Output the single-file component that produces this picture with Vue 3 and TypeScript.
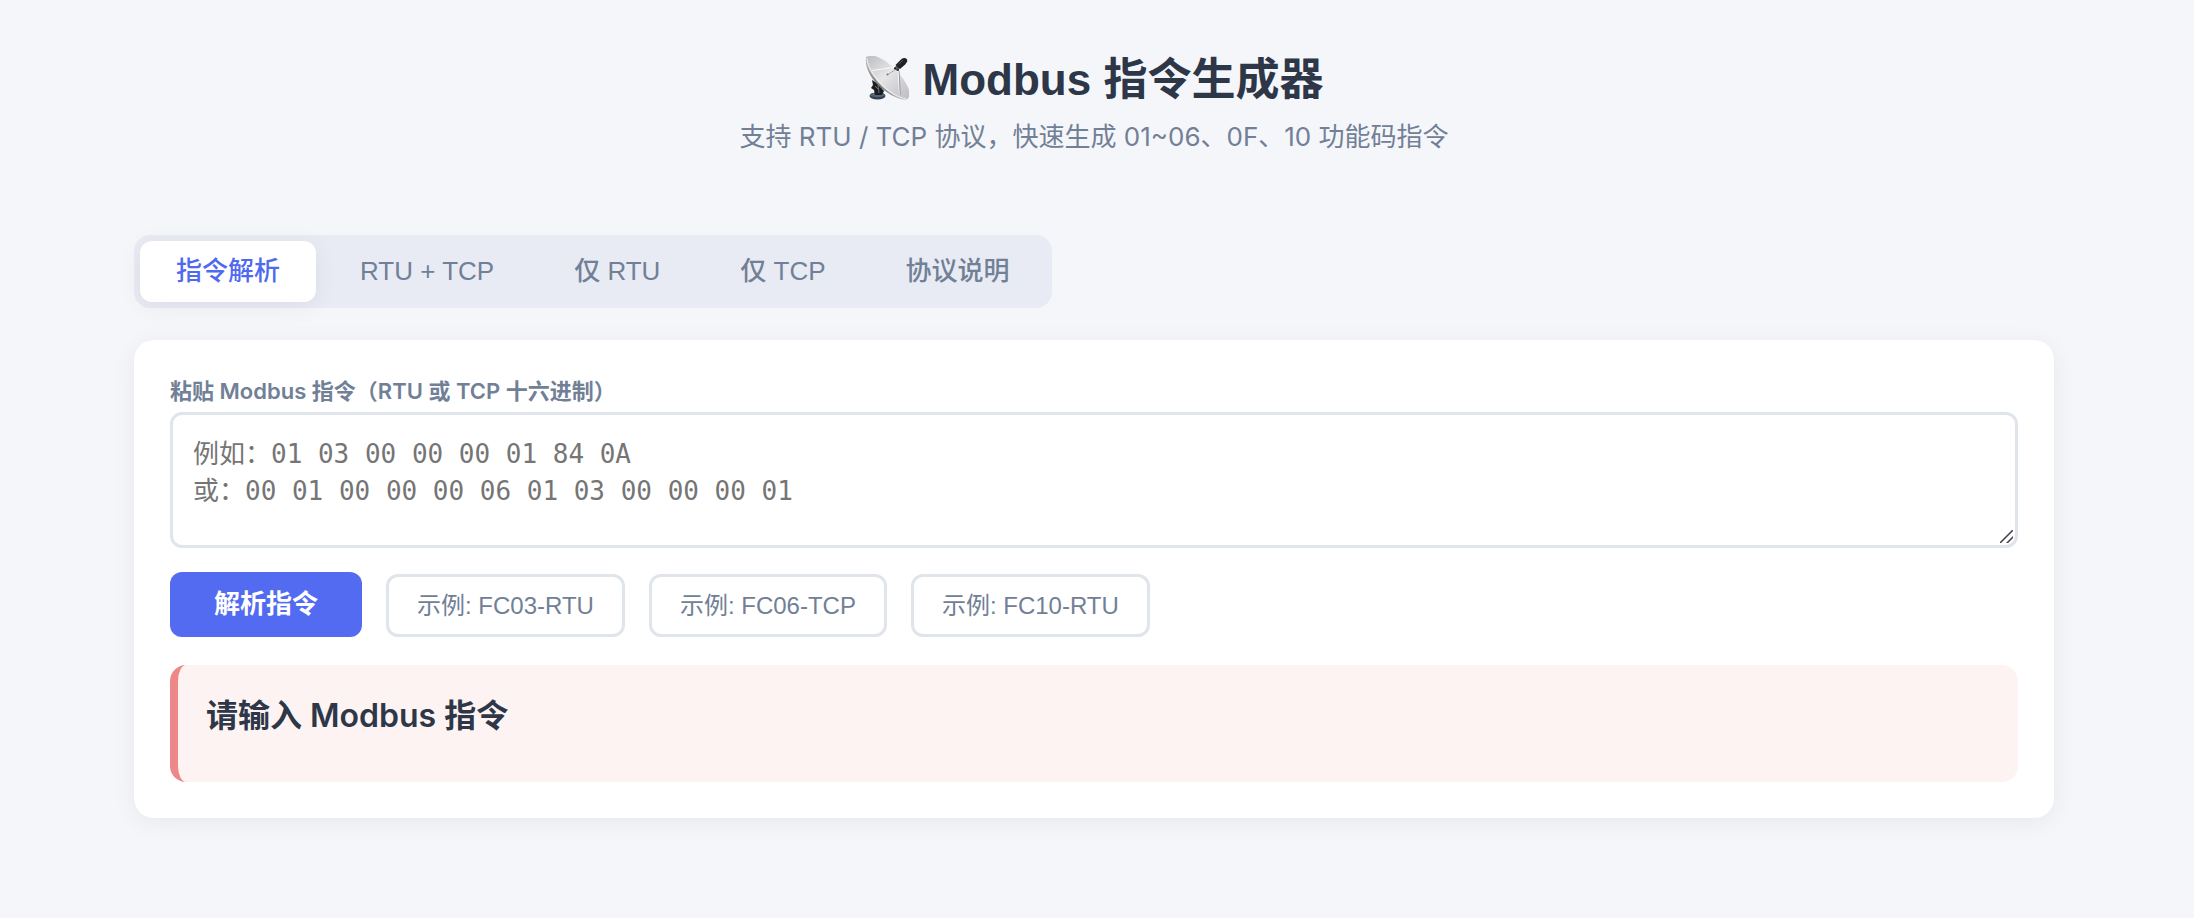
<script setup lang="ts">
import { ref } from 'vue'

interface Tab {
  id: string
  label: string
}

interface Sample {
  label: string
  frame: string
}

const tabs: Tab[] = [
  { id: 'parse', label: '指令解析' },
  { id: 'both', label: 'RTU + TCP' },
  { id: 'rtu', label: '仅 RTU' },
  { id: 'tcp', label: '仅 TCP' },
  { id: 'docs', label: '协议说明' },
]

const samples: Sample[] = [
  { label: '示例: FC03-RTU', frame: '01 03 00 00 00 01 84 0A' },
  { label: '示例: FC06-TCP', frame: '00 01 00 00 00 06 01 06 00 00 00 01' },
  { label: '示例: FC10-RTU', frame: '01 10 00 00 00 01 02 00 01 67 90' },
]

const placeholder = '例如：01 03 00 00 00 01 84 0A\n或：00 01 00 00 00 06 01 03 00 00 00 01'

const activeTab = ref('parse')
const frame = ref('')
const message = ref('请输入 Modbus 指令')

function parse(): void {
  message.value = frame.value.trim() ? frame.value.trim().toUpperCase() : '请输入 Modbus 指令'
}

function useSample(sample: Sample): void {
  frame.value = sample.frame
}
</script>

<template>
  <div class="page">
    <div class="container">
      <header class="header">
        <h1 class="title">
          <svg class="dish" viewBox="9 8 44 44" aria-hidden="true">
            <defs>
              <linearGradient id="dish-face" x1="0" y1="0" x2="1" y2="0">
                <stop offset="0" stop-color="#bfbfc1" />
                <stop offset="0.45" stop-color="#e6e6e8" />
                <stop offset="1" stop-color="#bdbdc3" />
              </linearGradient>
              <linearGradient id="dish-back" x1="0" y1="0" x2="1" y2="1">
                <stop offset="0" stop-color="#b4b4b6" />
                <stop offset="0.5" stop-color="#7d7d80" />
                <stop offset="1" stop-color="#b9b9be" />
              </linearGradient>
            </defs>
            <ellipse cx="21.5" cy="48" rx="8" ry="3.4" fill="#34404f" />
            <ellipse cx="21.5" cy="46.8" rx="7.4" ry="2.4" fill="#536477" />
            <path d="M16 32l5 3 7 8-2 4h-7l-1-5-3-2 2-3z" fill="#1c1d20" />
            <path d="M19 38l3 3M22 37l1 8" stroke="#6d7074" stroke-width="1" />
            <path d="M10 9.500C8.800 17 13 27.500 20.500 35.500C29.500 45 42 52 50 51.500C53 51 53.500 47 51 42L14 9C12 8 10.500 8.300 10 9.500Z" fill="url(#dish-back)" />
            <ellipse cx="32" cy="29.300" rx="28.800" ry="10.600" transform="rotate(45.500 32 29.300)" fill="url(#dish-face)" />
            <path d="M10.800 10C11.500 18 17.500 28 26 36.500C34 44.500 43 50 50 50.500" fill="none" stroke="#f4f4f5" stroke-width="0.900" />
            <path d="M40 19L16 22.500M40 21L31.500 27M42 19L43.500 47" fill="none" stroke="#fafafa" stroke-width="1.100" />
            <path d="M39.500 21.500L32 26.500M43.200 23L44.200 47" fill="none" stroke="#88888c" stroke-width="0.800" />
            <circle cx="31.500" cy="26.500" r="1" fill="#77777b" />
            <path d="M38 20l3-3 3 3-3 3z" fill="#55575b" />
            <path d="M39.500 17L45.500 11C48 9 52 10 51.200 13.500L49.200 16.500L44 21Z" fill="#202124" />
            <path d="M42.500 16.500L47 12" stroke="#55575c" stroke-width="1" />
            <circle cx="39" cy="20.500" r="1" fill="#17181a" />
            <circle cx="42" cy="22" r="1" fill="#17181a" />
          </svg>
          <span>Modbus 指令生成器</span>
        </h1>
        <p class="subtitle">支持 RTU / TCP 协议，快速生成 01~06、0F、10 功能码指令</p>
      </header>

      <nav class="tabs">
        <button
          v-for="tab in tabs"
          :key="tab.id"
          type="button"
          class="tab"
          :class="{ active: tab.id === activeTab }"
          @click="activeTab = tab.id"
        >
          {{ tab.label }}
        </button>
      </nav>

      <main class="card">
        <label class="label" for="frame">粘贴 Modbus 指令（RTU 或 TCP 十六进制）</label>
        <textarea id="frame" v-model="frame" class="input" rows="2" :placeholder="placeholder"></textarea>
        <div class="actions">
          <button type="button" class="primary" @click="parse">解析指令</button>
          <button
            v-for="sample in samples"
            :key="sample.label"
            type="button"
            class="sample"
            @click="useSample(sample)"
          >
            {{ sample.label }}
          </button>
        </div>
        <section class="alert" role="alert">
          <h2 class="alert-title">{{ message }}</h2>
        </section>
      </main>
    </div>
  </div>
</template>

<style>
body {
  background: #f5f6fa;
}
</style>

<style scoped>
.page {
  box-sizing: border-box;
  padding: 48px 70px 48px 64px;
  color: #2d3748;
  font-family: Inter, "Noto Sans CJK SC", sans-serif;
}

.container {
  max-width: 1920px;
  margin: 0 auto;
}

.header {
  margin-bottom: 79px;
  text-align: center;
}

.title {
  display: flex;
  align-items: center;
  justify-content: center;
  gap: 14px;
  margin: 0 0 6px;
  font-family: "Liberation Sans", "Noto Sans CJK SC", sans-serif;
  font-size: 44px;
  font-weight: 700;
  line-height: 64px;
}

.dish {
  width: 44px;
  height: 44px;
  margin-bottom: 4px;
}

.subtitle {
  margin: 0;
  color: #718096;
  font-size: 26px;
  line-height: 38px;
}

.tabs {
  display: flex;
  gap: 8px;
  width: fit-content;
  margin-bottom: 32px;
  padding: 6px;
  border-radius: 16px;
  background: #e8ebf3;
}

.tab {
  padding: 12px 36px;
  border: 0;
  border-radius: 12px;
  background: transparent;
  color: #718096;
  font-family: "Liberation Sans", "Noto Sans CJK SC", sans-serif;
  font-size: 26px;
  font-weight: 500;
  line-height: 37px;
  cursor: pointer;
}

.tab.active {
  background: #fff;
  box-shadow: 0 4px 24px rgba(0, 0, 0, 0.06);
  color: #4f6af0;
}

.card {
  padding: 36px;
  border-radius: 20px;
  background: #fff;
  box-shadow: 0 4px 24px rgba(0, 0, 0, 0.06);
}

.label {
  display: block;
  margin-bottom: 6px;
  color: #718096;
  font-size: 22px;
  font-weight: 600;
  line-height: 30px;
}

.input {
  display: block;
  box-sizing: border-box;
  width: 100%;
  min-height: 136px;
  padding: 21px 20px 19px;
  border: 3px solid #e0e4eb;
  border-radius: 12px;
  background: #fff;
  color: #2d3748;
  font-family: "DejaVu Sans Mono", "Noto Sans CJK SC", monospace;
  font-size: 26px;
  line-height: 37px;
  resize: vertical;
}

.input::placeholder {
  color: #757575;
}

.input::-webkit-resizer {
  background: linear-gradient(135deg, transparent 45%, #444 47%, #444 53%, transparent 55%, transparent 72%, #444 74%, #444 80%, transparent 82%) 0 0 / 13px 13px no-repeat;
}

.actions {
  display: flex;
  flex-wrap: wrap;
  align-items: flex-end;
  gap: 24px;
  margin: 24px 0 28px;
}

.primary,
.sample {
  border-radius: 12px;
  font-family: "Liberation Sans", "Noto Sans CJK SC", sans-serif;
  cursor: pointer;
}

.primary {
  padding: 14px 44px;
  border: 0;
  background: #526bf0;
  color: #fff;
  font-size: 26px;
  font-weight: 600;
  line-height: 37px;
}

.sample {
  padding: 12px 28px;
  border: 3px solid #e0e4eb;
  background: #fff;
  color: #718096;
  font-size: 24px;
  line-height: 33px;
}

.alert {
  padding: 28px;
  border-left: 8px solid #ee8888;
  border-radius: 16px;
  background: #fdf3f2;
}

.alert-title {
  margin: 0 0 16px;
  font-size: 32px;
  font-weight: 600;
  line-height: 45px;
}
</style>
